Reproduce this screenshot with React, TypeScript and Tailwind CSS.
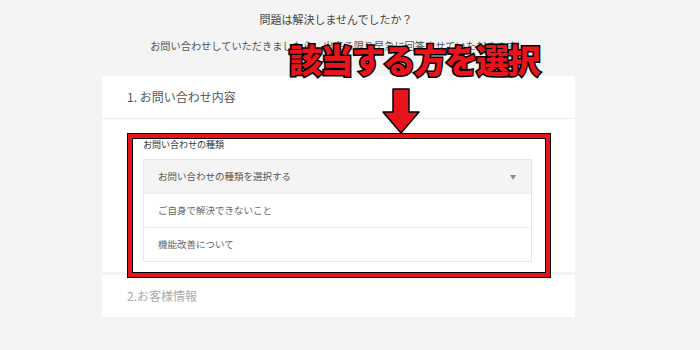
const options = ["ご自身で解決できないこと", "機能改善について"];

function InquiryForm() {
    return (
        <div className="ml-[102px] w-[473px]">
            {/* Card 1 */}
            <div className="bg-white">
                <div className="h-[43px] flex items-center pl-[25px] border-b border-[#eeeeee] text-[12px] text-[#555555]">
                    1. お問い合わせ内容
                </div>
                <div className="pt-[21px] pl-[41px] pr-[43px] pb-[10px]">
                    <div className="h-[10px] leading-[10px] text-[9px] text-[#333333] mb-[9px]">お問い合わせの種類</div>
                    <div className="border border-[#e6e6e6]">
                        <div className="h-[33px] bg-[#f4f4f4] flex items-center justify-between pl-[14px] pr-[15px] text-[9.5px] text-[#555555]">
                            <span>お問い合わせの種類を選択する</span>
                            <span className="text-[6px] text-[#888888]">▼</span>
                        </div>
                        {options.map((o) => (
                            <div key={o} className="h-[34px] flex items-center pl-[14px] border-t border-[#eeeeee] text-[9.5px] text-[#666666]">
                                {o}
                            </div>
                        ))}
                    </div>
                </div>
            </div>

            {/* Card 2 */}
            <div className="bg-white mt-[3px] h-[42px] flex items-center pl-[25px] text-[12px] text-[#aaaaaa]">
                2.お客様情報
            </div>
        </div>
    );
}

export default function App() {
    return (
        <div className="relative w-[700px] h-[350px] overflow-hidden bg-[#f4f4f4] font-['Noto_Sans_CJK_JP',sans-serif]">
            <div className="pt-[12px] text-center text-[11px] leading-[14px] text-[#444444] pr-[28px]">
                問題は解決しませんでしたか？
            </div>
            <div className="mt-[13px] text-center text-[10.2px] leading-[14px] text-[#555555] pr-[24px]">
                お問い合わせしていただきましたら、出来る限り早急に回答させていただきます。
            </div>
            <div className="mt-[23px]">
                <InquiryForm />
            </div>

            {/* annotation overlays */}
            <div className="absolute left-[289px] top-[38px] text-[33px] leading-[42px] font-black tracking-[-1.8px] text-[#e8141c] [-webkit-text-stroke:3px_#000] [paint-order:stroke_fill] whitespace-nowrap">
                該当する方を選択
            </div>
            <svg className="absolute left-[382px] top-[88px]" width="38" height="47" viewBox="0 0 38 47">
                <path d="M11 1 H27 V24 H37 L19 45 L1 24 H11 Z" fill="#e8141c" stroke="#000" strokeWidth="1.5" strokeLinejoin="round" />
            </svg>
            <div className="absolute left-[128px] top-[134px] w-[422px] h-[143px] border-[4px] border-[#e8141c] shadow-[0_0_0_1px_#000,inset_0_0_0_1px_#000]" />
        </div>
    );
}
